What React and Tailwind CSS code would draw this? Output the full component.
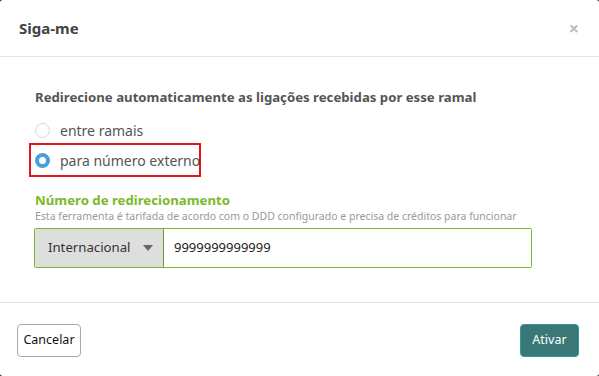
import { useState } from 'react';

const App = () => {
  const [mode, setMode] = useState('externo');
  const [numero, setNumero] = useState('9999999999999');

  return (
    <div className="w-[599px] h-[376px] bg-[#333] overflow-hidden" style={{ fontFamily: '"Noto Sans", "Open Sans", sans-serif' }}>
      <div className="w-full h-full bg-white rounded-[3px] flex flex-col">
        <div className="h-[57px] flex items-center justify-between pl-[19px] pr-[20px] border-b border-[#e5e5e5]">
          <h1 className="text-[15px] font-bold text-[#444]">Siga-me</h1>
          <button className="text-[#bdbdbd] text-[18px] font-bold leading-none">×</button>
        </div>

        <div className="flex-1 pl-[35px] pr-[66px] pt-[30px] border-b border-[#e5e5e5]">
          <p className="text-[13.2px] font-bold text-[#555] leading-[20px] whitespace-nowrap">
            Redirecione automaticamente as ligações recebidas por esse ramal
          </p>

          <div className="mt-[12px] flex flex-col">
            <label className="flex items-center gap-[10px] h-[22px] text-[14px] text-[#555] cursor-pointer whitespace-nowrap" onClick={() => setMode('ramais')}>
              <span className={mode === 'ramais' ? 'w-[15px] h-[15px] rounded-full border-[4px] border-[#4a9fd8] bg-white' : 'w-[15px] h-[15px] rounded-full border border-[#d5d5d5] bg-white'} />
              entre ramais
            </label>
            <div className="-ml-[6px] mt-[2px] w-[172px] h-[34px] border-2 border-[#e3161e] flex items-center pl-[4px]">
              <label className="flex items-center gap-[10px] text-[14px] text-[#555] cursor-pointer whitespace-nowrap" onClick={() => setMode('externo')}>
                <span className={mode === 'externo' ? 'w-[15px] h-[15px] rounded-full border-[4px] border-[#4a9fd8] bg-white' : 'w-[15px] h-[15px] rounded-full border border-[#d5d5d5] bg-white'} />
                para número externo
              </label>
            </div>
          </div>

          <h2 className="mt-[14px] text-[13.2px] font-bold text-[#7ab929] leading-[18px]">Número de redirecionamento</h2>
          <p className="text-[10.5px] text-[#999] leading-[14px] whitespace-nowrap">
            Esta ferramenta é tarifada de acordo com o DDD configurado e precisa de créditos para funcionar
          </p>

          <div className="mt-[5px] -ml-[1px] w-[498px] h-[40px] flex border border-[#7ab929] rounded-[2px]">
            <div className="w-[129px] h-full bg-[#dedede] border-r border-[#6aa02a] flex items-center justify-between pl-[13px] pr-[10px] text-[13.2px] text-[#333]">
              <span>Internacional</span>
              <svg width="10" height="6" viewBox="0 0 10 6"><path d="M0 0h10L5 6z" fill="#666" /></svg>
            </div>
            <input
              className="flex-1 px-[10px] text-[13px] text-[#222] outline-none bg-white"
              value={numero}
              onChange={e => setNumero(e.target.value)}
            />
          </div>
        </div>

        <div className="h-[73px] flex items-center justify-between pl-[17px] pr-[20px] pt-[1px]">
          <button className="w-[64px] h-[33px] border border-[#aaa] rounded-[4px] text-[12.5px] text-[#111] bg-white">Cancelar</button>
          <button className="w-[59px] h-[33px] border border-[#2a9aa5] rounded-[4px] text-[12.5px] text-white bg-[#3a7878]">Ativar</button>
        </div>
      </div>
    </div>
  );
};

export default App;
